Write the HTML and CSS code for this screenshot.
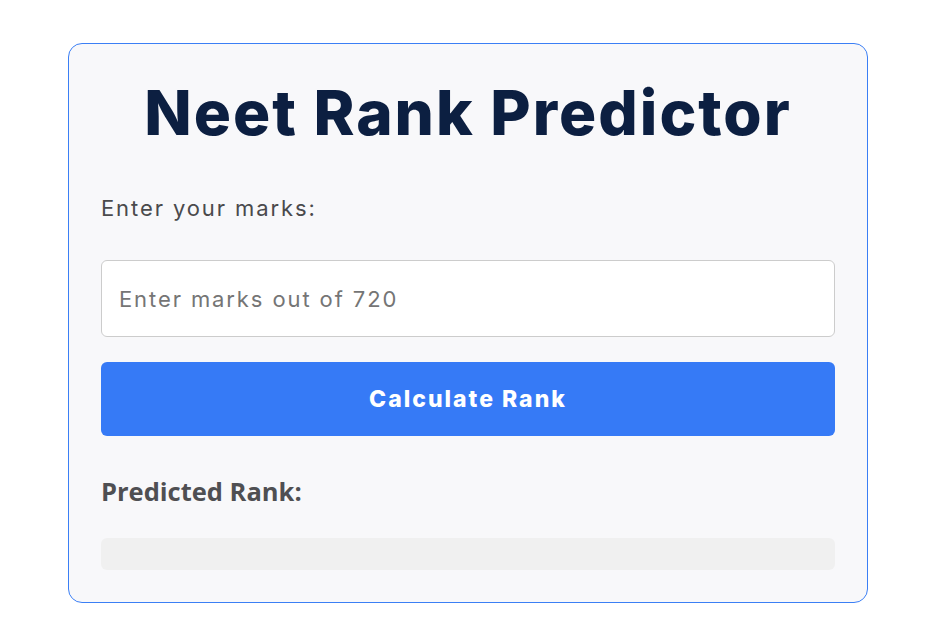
FILE: index.html
```html
<!DOCTYPE html>
<html lang="en">
<head>
    <meta charset="UTF-8">
    <meta name="viewport" content="width=device-width, initial-scale=1.0">
    <title>Neet Rank Predictor</title>
    <link rel="stylesheet" href="styles.css">
</head>
<body>
    <div class="container">
        <h1>Neet Rank Predictor</h1>
        <label for="marks" class="marks-label">Enter your marks:</label>
        <input type="number" id="marks" placeholder="Enter marks out of 720">
        <button type="button" id="calcBtn">Calculate Rank</button>
        <h3 class="result-title">Predicted Rank:</h3>
        <div id="result" class="result"></div>
    </div>
</body>
</html>
```

FILE: styles.css
```css
body, html {
    margin: 0;
    padding: 0;
    background-color: #ffffff;
    font-family: Inter, "Noto Sans", sans-serif;
}
body {
    display: flex;
    justify-content: center;
    padding-top: 43px;
}
.container {
    box-sizing: border-box;
    width: 800px;
    padding: 32px;
    background-color: #f8f8fa;
    border: 1px solid #3b7ff5;
    border-radius: 14px;
}
h1 {
    margin: 0;
    font-size: 62px;
    line-height: 1.2;
    font-weight: 800;
    text-align: center;
    color: #0c1f41;
    letter-spacing: 2px;
}
.marks-label {
    display: block;
    margin-top: 46px;
    font-size: 22px;
    line-height: 24px;
    letter-spacing: 1.9px;
    color: #4a4a4c;
}
input {
    display: block;
    box-sizing: border-box;
    width: 100%;
    height: 77px;
    margin-top: 40px;
    padding: 0 17px;
    font-family: inherit;
    font-size: 22px;
    letter-spacing: 1.9px;
    border: 1px solid #cccccc;
    border-radius: 6px;
    background-color: #ffffff;
    outline: none;
}
input::placeholder {
    color: #757575;
}
button {
    display: block;
    width: 100%;
    height: 74px;
    margin-top: 25px;
    border: none;
    border-radius: 6px;
    background-color: #367af6;
    color: white;
    font-family: inherit;
    font-size: 23px;
    font-weight: 800;
    letter-spacing: 2px;
    cursor: pointer;
}
.result-title {
    margin: 40px 0 0;
    font-family: "Open Sans", sans-serif;
    font-size: 25.5px;
    line-height: 30px;
    font-weight: 700;
    color: #4f4f52;
}
.result {
    height: 32px;
    margin-top: 32px;
    background-color: #f0f0f0;
    border-radius: 6px;
}
```
